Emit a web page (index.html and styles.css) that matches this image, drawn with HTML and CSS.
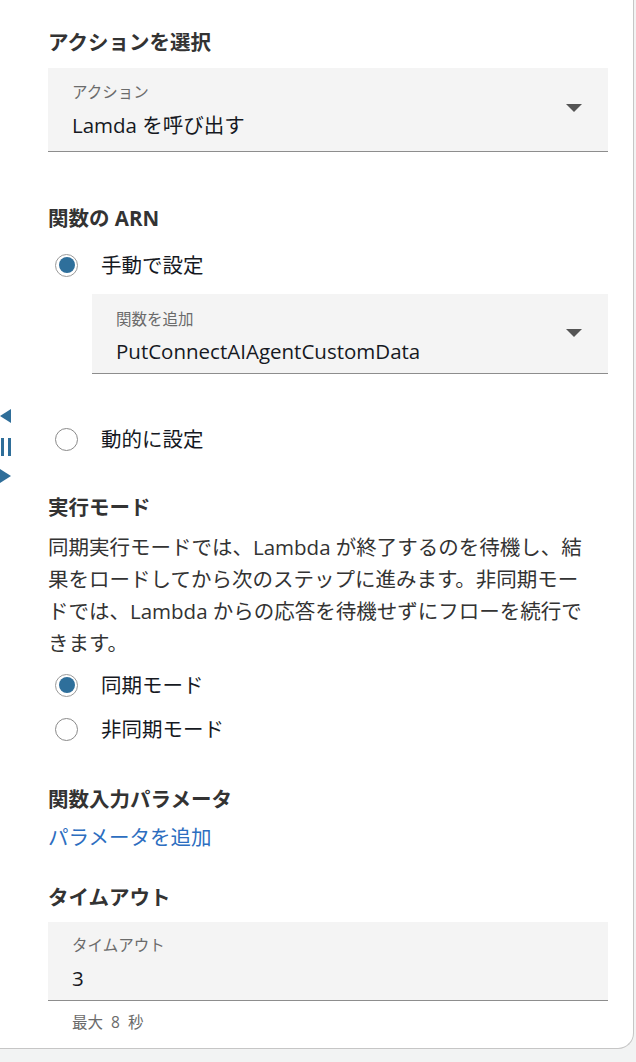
FILE: index.html
```html
<!DOCTYPE html>
<html lang="ja">
<head>
<meta charset="utf-8">
<link rel="stylesheet" href="styles.css">
</head>
<body>
<div class="page">
  <div class="panel">
    <h2 class="heading h-first">アクションを選択</h2>
    <div class="select s-action">
      <div class="select-label">アクション</div>
      <div class="select-value">Lamda を呼び出す</div>
      <span class="caret"></span>
    </div>

    <h2 class="heading h-arn">関数の ARN</h2>
    <label class="radio-row r-manual"><span class="radio checked"></span><span class="radio-text">手動で設定</span></label>
    <div class="select s-func">
      <div class="select-label">関数を追加</div>
      <div class="select-value">PutConnectAIAgentCustomData</div>
      <span class="caret"></span>
    </div>
    <label class="radio-row r-dynamic"><span class="radio"></span><span class="radio-text">動的に設定</span></label>

    <h2 class="heading h-mode">実行モード</h2>
    <p class="desc">同期実行モードでは、Lambda が終了するのを待機し、結<br>果をロードしてから次のステップに進みます。非同期モー<br>ドでは、Lambda からの応答を待機せずにフローを続行で<br>きます。</p>
    <label class="radio-row r-sync"><span class="radio checked"></span><span class="radio-text">同期モード</span></label>
    <label class="radio-row r-async"><span class="radio"></span><span class="radio-text">非同期モード</span></label>

    <h2 class="heading h-params">関数入力パラメータ</h2>
    <a class="link">パラメータを追加</a>

    <h2 class="heading h-timeout">タイムアウト</h2>
    <div class="select s-timeout">
      <div class="select-label">タイムアウト</div>
      <div class="select-value">3</div>
    </div>
    <div class="hint">最大&nbsp;&nbsp;8&nbsp;&nbsp;秒</div>

    <div class="handle">
      <svg width="14" height="80" viewBox="0 0 14 80">
        <polygon points="0,7 11,0 11,14" fill="#2f6e99"/>
        <rect x="1" y="29" width="3" height="18" fill="#2f6e99"/>
        <rect x="8" y="29" width="3" height="18" fill="#2f6e99"/>
        <polygon points="0,60 11,67 0,74" fill="#2f6e99"/>
      </svg>
    </div>
  </div>
</div>
</body>
</html>
```
FILE: styles.css
```css
* { box-sizing: border-box; }
html, body { margin: 0; padding: 0; }
body {
  background: #f2f3f3;
  font-family: "Open Sans", "Noto Sans CJK JP", sans-serif;
  color: #16191f;
  width: 636px;
  height: 1062px;
  overflow: hidden;
}
.page { height: 1062px; }
.panel {
  position: relative;
  width: 634px;
  height: 1049px;
  background: #ffffff;
  border-right: 1px solid #c6c6c6;
  border-bottom: 1px solid #c6c6c6;
  border-bottom-right-radius: 16px;
  padding: 30px 25px 0 48px;
  display: flex;
  flex-direction: column;
}
.heading {
  margin: 0;
  font-size: 20.5px;
  line-height: 24px;
  font-weight: 700;
  color: #333333;
}
.h-arn { margin-top: 54px; }
.h-mode { margin-top: 40px; }
.h-params { margin-top: 42px; }
.h-timeout { margin-top: 35px; }

.select {
  position: relative;
  background: #f4f4f4;
  border-bottom: 1px solid #8d8d8d;
  padding: 15px 24px 13px 24px;
}
.s-action { margin-top: 14px; }
.s-func { margin-top: 13px; margin-left: 44px; padding-top: 16px; padding-bottom: 9px; }
.s-timeout { margin-top: 13px; padding-top: 14px; padding-bottom: 9px; }
.select-label {
  font-size: 15.5px;
  line-height: 18px;
  color: #6b6b6b;
}
.select-value {
  margin-top: 11px;
  font-size: 20.5px;
  line-height: 26px;
  color: #16191f;
}
.s-func .select-value { margin-top: 10px; }
.caret {
  position: absolute;
  right: 26px;
  top: 50%;
  margin-top: -4px;
  width: 0;
  height: 0;
  border-left: 8.5px solid transparent;
  border-right: 8.5px solid transparent;
  border-top: 8px solid #545454;
}
.s-action .caret { margin-top: -6px; }
.s-func .caret { margin-top: -5px; }

.radio-row {
  display: flex;
  align-items: center;
  height: 32px;
  padding-left: 7px;
}
.r-manual { margin-top: 19px; }
.r-dynamic { margin-top: 49px; }
.r-sync { margin-top: 10px; }
.r-async { margin-top: 12px; }
.radio {
  width: 23px;
  height: 23px;
  border-radius: 50%;
  border: 1.5px solid #8a8a8a;
  background: #fff;
  flex: none;
  position: relative;
}
.radio.checked {
  border: 1px solid #9a9a9a;
}
.radio.checked::after {
  content: "";
  position: absolute;
  left: 2.5px;
  top: 2.5px;
  width: 16px;
  height: 16px;
  border-radius: 50%;
  background: #2e6f9b;
}
.radio-text {
  margin-left: 23px;
  font-size: 20.5px;
  line-height: 26px;
  color: #16191f;
}
.desc {
  margin: 12px 0 0 0;
  font-size: 20.5px;
  line-height: 32px;
  color: #333333;
  white-space: nowrap;
}
.link {
  margin-top: 13px;
  font-size: 20.5px;
  line-height: 26px;
  color: #2d6ec0;
}
.hint {
  margin-top: 12px;
  padding-left: 24px;
  font-size: 15.5px;
  line-height: 18px;
  color: #6b6b6b;
}
.handle {
  position: absolute;
  left: 0;
  top: 409px;
  line-height: 0;
}
```
